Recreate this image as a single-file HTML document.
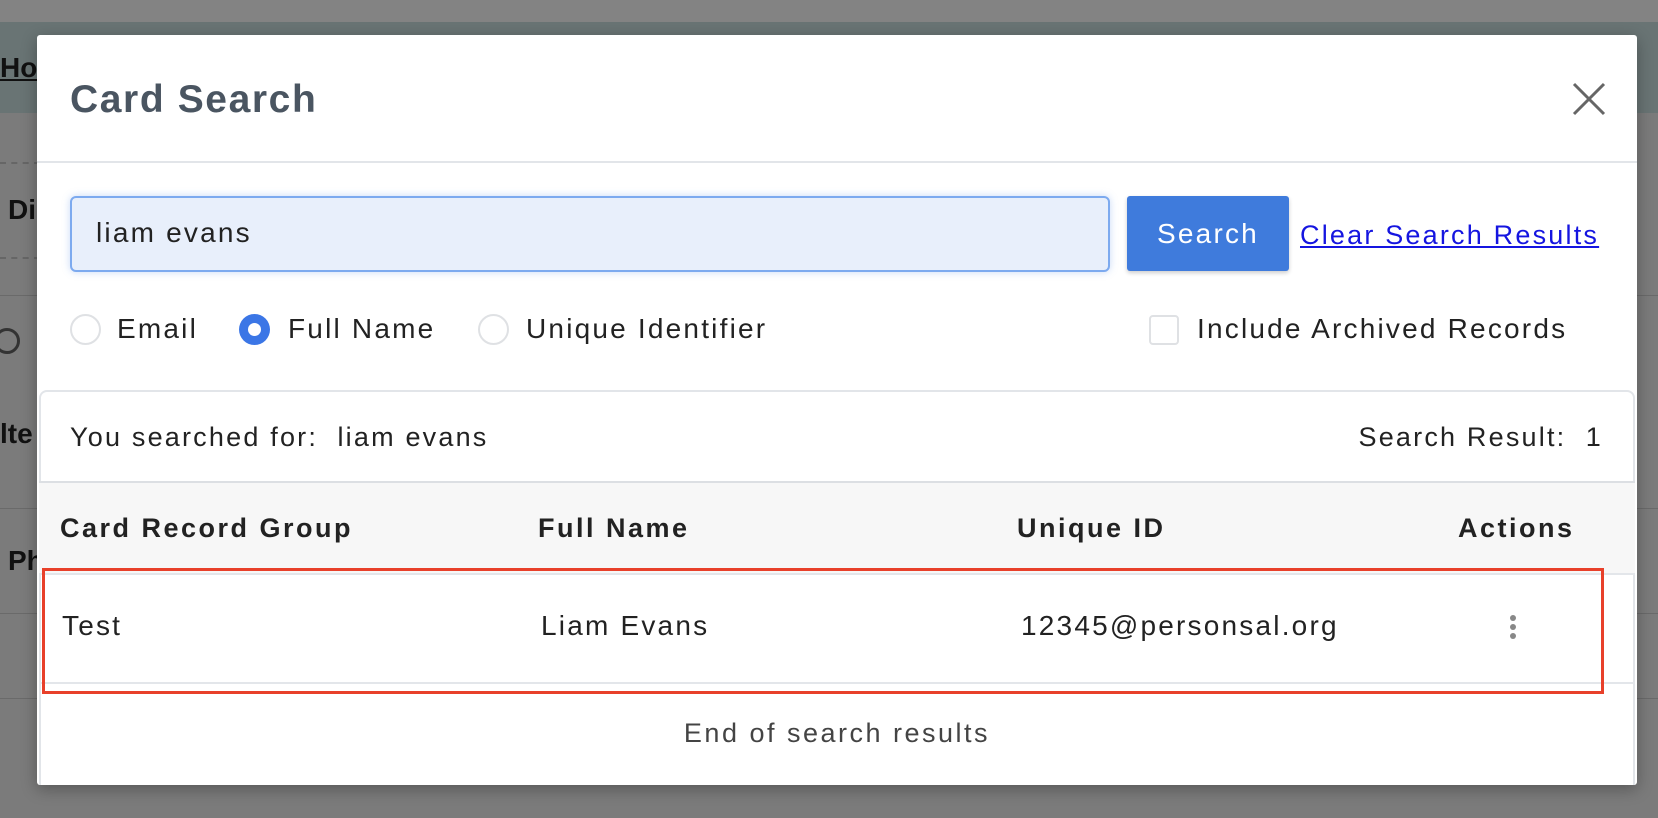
<!DOCTYPE html>
<html><head><meta charset="utf-8"><style>
*{box-sizing:border-box;margin:0;padding:0}
body{width:1658px;height:818px;overflow:hidden;background:#7b7b7b;font-family:"Liberation Sans",sans-serif;position:relative;color:#222}
.abs{position:absolute}
.m .abs{letter-spacing:2.2px}
.bgtext{position:absolute;font-weight:bold;font-size:28px;color:#111}
</style></head><body>
<div class="abs" style="left:0;top:0;width:1658px;height:22px;background:#838383"></div>
<div class="abs" style="left:0;top:22px;width:1658px;height:91px;background:#697474"></div>
<div class="bgtext" style="left:0;top:52px;text-decoration:underline">Ho</div>
<div class="abs" style="left:0;top:162px;width:40px;border-top:2px dashed #666"></div>
<div class="bgtext" style="left:8px;top:194px">Di</div>
<div class="abs" style="left:0;top:257px;width:40px;border-top:2px dashed #666"></div>
<div class="abs" style="left:0;top:295px;width:1658px;height:1px;background:#6a6a6a"></div>
<div class="abs" style="left:-6px;top:328px;width:26px;height:26px;border:3px solid #333;border-radius:50%"></div>
<div class="bgtext" style="left:0;top:418px">lte</div>
<div class="abs" style="left:0;top:508px;width:1658px;height:1px;background:#6a6a6a"></div>
<div class="bgtext" style="left:8px;top:545px">Ph</div>
<div class="abs" style="left:0;top:613px;width:1658px;height:1px;background:#6a6a6a"></div>
<div class="abs" style="left:0;top:698px;width:1658px;height:1px;background:#6a6a6a"></div>

<div class="abs m" style="left:37px;top:35px;width:1600px;height:750px;background:#fff;border-radius:3px;box-shadow:0 4px 16px rgba(0,0,0,.3)">
  <div class="abs" style="left:33px;top:43px;font-size:39px;font-weight:bold;color:#4a5561;letter-spacing:1.6px">Card Search</div>
  <svg class="abs" style="left:1535px;top:47px" width="34" height="34" viewBox="0 0 34 34"><path d="M2 2L32 32M32 2L2 32" stroke="#666" stroke-width="3"/></svg>
  <div class="abs" style="left:0;top:126px;width:1600px;height:2px;background:#e2e5e9"></div>

  <div class="abs" style="left:33px;top:161px;width:1040px;height:76px;background:#e8effb;border:2px solid #7daaef;border-radius:6px;box-shadow:0 0 8px rgba(100,150,230,.35)"></div>
  <div class="abs" style="left:59px;top:182px;font-size:28px;color:#222">liam evans</div>
  <div class="abs" style="left:1090px;top:161px;width:162px;height:75px;background:#3f7bdc;border-radius:3px;color:#fff;font-size:28px;line-height:75px;text-align:center;box-shadow:0 2px 4px rgba(0,0,0,.2)">Search</div>
  <div class="abs" style="left:1263px;top:185px;font-size:27px;color:#1515e0;text-decoration:underline">Clear Search Results</div>

  <div class="abs" style="left:33px;top:279px;width:31px;height:31px;border:2px solid #dfe1e4;border-radius:50%"></div>
  <div class="abs" style="left:80px;top:278px;font-size:28px">Email</div>
  <div class="abs" style="left:202px;top:279px;width:31px;height:31px;background:#3b76e6;border-radius:50%"><div style="margin:9px;width:13px;height:13px;background:#fff;border-radius:50%"></div></div>
  <div class="abs" style="left:251px;top:278px;font-size:28px">Full Name</div>
  <div class="abs" style="left:441px;top:279px;width:31px;height:31px;border:2px solid #dfe1e4;border-radius:50%"></div>
  <div class="abs" style="left:489px;top:278px;font-size:28px">Unique Identifier</div>
  <div class="abs" style="left:1112px;top:280px;width:30px;height:30px;border:2px solid #dfe1e4;border-radius:4px"></div>
  <div class="abs" style="left:1160px;top:278px;font-size:28px">Include Archived Records</div>

  <div class="abs" style="left:2px;top:355px;width:1596px;height:395px;border:2px solid #e2e5e9;border-bottom:none;border-radius:8px 8px 0 0"></div>
  <div class="abs" style="left:33px;top:387px;font-size:27px">You searched for:&nbsp; liam evans</div>
  <div class="abs" style="right:34px;top:387px;font-size:27px">Search Result:&nbsp; 1</div>
  <div class="abs" style="left:2px;top:446px;width:1596px;height:94px;background:#f7f7f7;border-top:2px solid #dcdfe3;border-bottom:2px solid #e3e6ea"></div>
  <div class="abs" style="left:23px;top:478px;font-size:27px;font-weight:bold;letter-spacing:2.5px">Card Record Group</div>
  <div class="abs" style="left:501px;top:478px;font-size:27px;font-weight:bold;letter-spacing:2.5px">Full Name</div>
  <div class="abs" style="left:980px;top:478px;font-size:27px;font-weight:bold;letter-spacing:2.5px">Unique ID</div>
  <div class="abs" style="left:1421px;top:478px;font-size:27px;font-weight:bold;letter-spacing:2.5px">Actions</div>
  <div class="abs" style="left:2px;top:647px;width:1596px;height:2px;background:#e3e6ea"></div>
  <div class="abs" style="left:25px;top:575px;font-size:28px">Test</div>
  <div class="abs" style="left:504px;top:575px;font-size:28px">Liam Evans</div>
  <div class="abs" style="left:984px;top:575px;font-size:28px">12345@personsal.org</div>
  <div class="abs" style="left:1473px;top:580px;width:6px">
    <div style="width:6px;height:6px;border-radius:50%;background:#888;margin-bottom:3px"></div>
    <div style="width:6px;height:6px;border-radius:50%;background:#888;margin-bottom:3px"></div>
    <div style="width:6px;height:6px;border-radius:50%;background:#888"></div>
  </div>
  <div class="abs" style="left:5px;top:533px;width:1562px;height:126px;border:3px solid #e8402a"></div>
  <div class="abs" style="left:0;top:683px;width:1600px;text-align:center;font-size:27px;color:#444;letter-spacing:2.5px">End of search results</div>
</div>
</body></html>
